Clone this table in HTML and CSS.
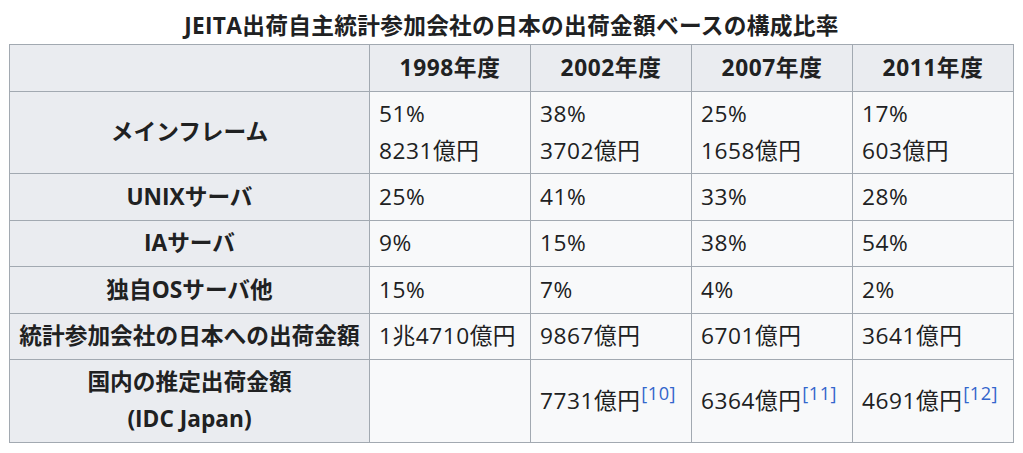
FILE: index.html
```html
<!DOCTYPE html>
<html lang="ja">
<head>
<meta charset="utf-8">
<title>JEITA出荷自主統計</title>
<link rel="stylesheet" href="styles.css">
</head>
<body>
<table class="wikitable">
  <caption>JEITA出荷自主統計参加会社の日本の出荷金額ベースの構成比率</caption>
  <colgroup>
    <col class="c-label">
    <col class="c-year c-first">
    <col class="c-year">
    <col class="c-year">
    <col class="c-year">
  </colgroup>
  <thead>
    <tr>
      <th></th>
      <th class="year">1998年度</th>
      <th class="year">2002年度</th>
      <th class="year">2007年度</th>
      <th class="year">2011年度</th>
    </tr>
  </thead>
  <tbody>
    <tr>
      <th>メインフレーム</th>
      <td>51%<br>8231億円</td>
      <td>38%<br>3702億円</td>
      <td>25%<br>1658億円</td>
      <td>17%<br>603億円</td>
    </tr>
    <tr>
      <th>UNIXサーバ</th>
      <td>25%</td>
      <td>41%</td>
      <td>33%</td>
      <td>28%</td>
    </tr>
    <tr>
      <th>IAサーバ</th>
      <td>9%</td>
      <td>15%</td>
      <td>38%</td>
      <td>54%</td>
    </tr>
    <tr>
      <th>独自OSサーバ他</th>
      <td>15%</td>
      <td>7%</td>
      <td>4%</td>
      <td>2%</td>
    </tr>
    <tr>
      <th>統計参加会社の日本への出荷金額</th>
      <td>1兆4710億円</td>
      <td>9867億円</td>
      <td>6701億円</td>
      <td>3641億円</td>
    </tr>
    <tr>
      <th>国内の推定出荷金額<br>(IDC Japan)</th>
      <td></td>
      <td>7731億円<sup class="ref"><a href="#cite-10">[10]</a></sup></td>
      <td>6364億円<sup class="ref"><a href="#cite-11">[11]</a></sup></td>
      <td>4691億円<sup class="ref"><a href="#cite-12">[12]</a></sup></td>
    </tr>
  </tbody>
</table>
</body>
</html>
```

FILE: styles.css
```css
html, body {
  background: #ffffff;
}

body {
  margin: 8px 0;
  font-family: "Open Sans", "Noto Sans CJK JP", sans-serif;
  font-size: 22.7px;
  line-height: 1.6;
  color: #202122;
}

.wikitable {
  margin: 0 auto;
  width: 1003px;
  table-layout: fixed;
  border-collapse: collapse;
  background: #f8f9fa;
  color: #202122;
  border: 1px solid #a2a9b1;
}

.wikitable caption {
  font-weight: bold;
  text-align: center;
  white-space: nowrap;
  letter-spacing: 0.3px;
}

.c-label {
  width: 360px;
}

.c-first {
  width: 159px;
}

.c-year {
  width: 161px;
}

.wikitable th,
.wikitable td {
  border: 1px solid #a2a9b1;
  padding: 0.2em 0.4em;
  white-space: nowrap;
  vertical-align: middle;
}

.wikitable th {
  background: #eaecf0;
  font-weight: bold;
  text-align: center;
}

.wikitable th.year {
  letter-spacing: 0.6px;
}

.wikitable td {
  text-align: left;
  letter-spacing: 0.5px;
}

.ref {
  font-size: 80%;
  line-height: 1;
  vertical-align: super;
  font-weight: normal;
  margin-left: 1px;
}

.ref a {
  color: #3366cc;
  text-decoration: none;
}
```
